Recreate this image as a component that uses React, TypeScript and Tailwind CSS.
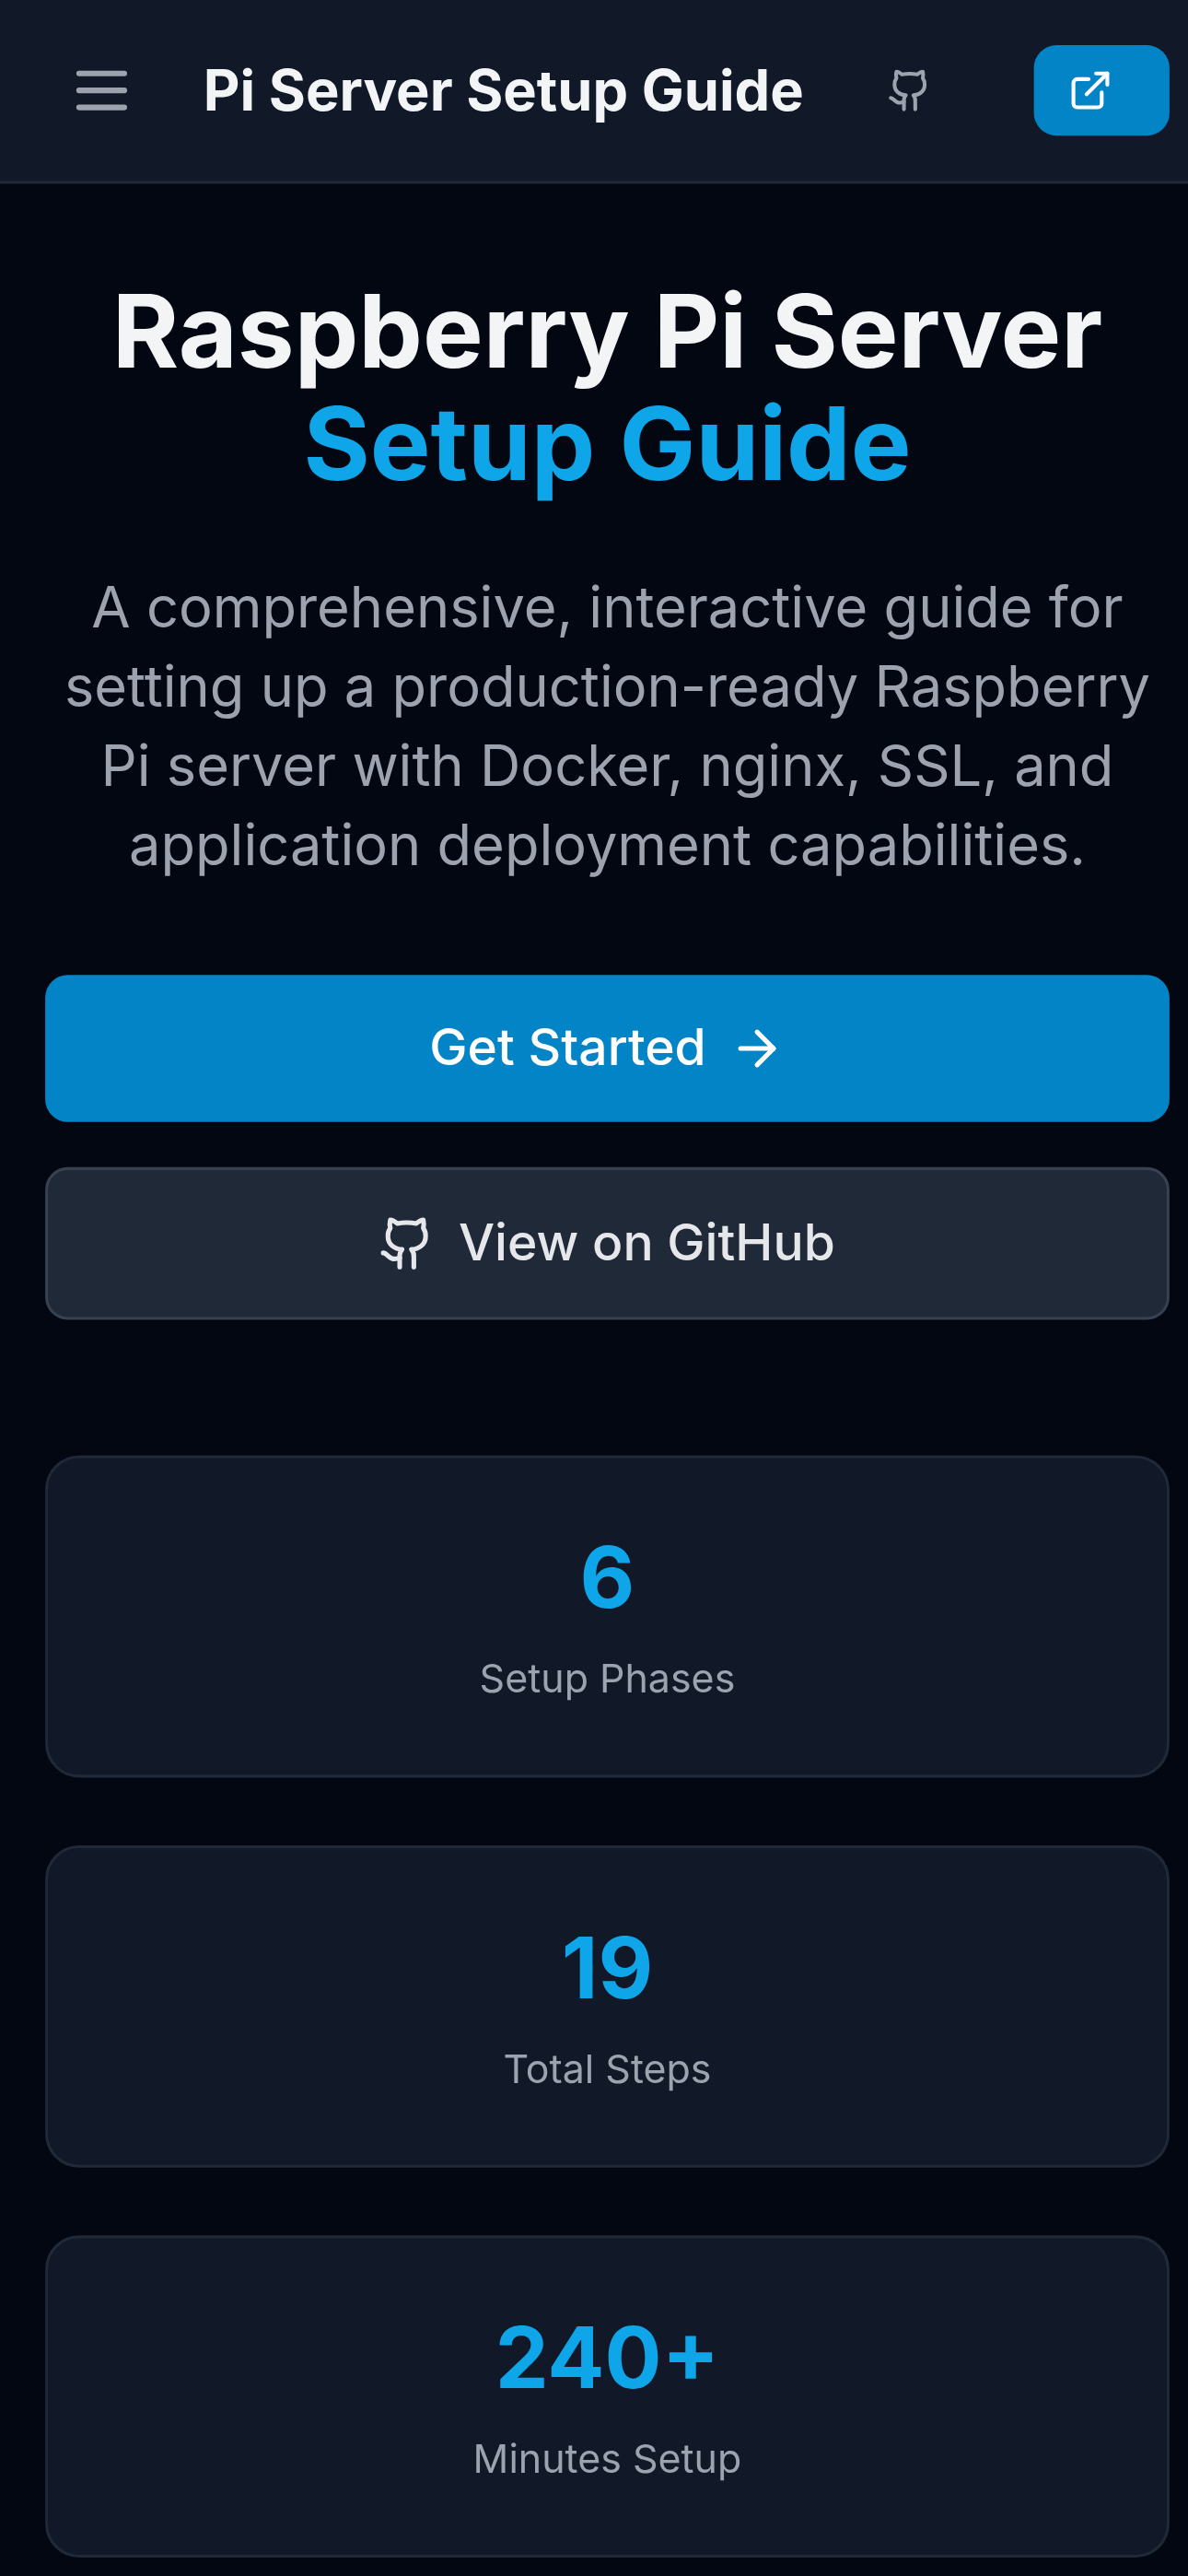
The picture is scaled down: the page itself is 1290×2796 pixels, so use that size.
import { ArrowRight, ExternalLink, Github } from "lucide-react";

const stats = [
  { value: "6", label: "Setup Phases" },
  { value: "19", label: "Total Steps" },
  { value: "240+", label: "Minutes Setup" },
];

function MenuIcon() {
  return (
    <svg
      viewBox="0 0 24 24"
      fill="none"
      stroke="currentColor"
      strokeWidth={2}
      strokeLinecap="round"
      strokeLinejoin="round"
      className="h-6 w-6"
    >
      <path d="M4 6h16M4 12h16M4 18h16" />
    </svg>
  );
}

function Header() {
  return (
    <header className="flex h-[65px] items-center justify-between border-b border-[#1f2937] bg-[#111827] px-4">
      <div className="flex items-center gap-4">
        <button aria-label="Open menu" className="rounded-lg p-2 text-[#9ca3af]">
          <MenuIcon />
        </button>
        <h1 className="text-xl font-bold whitespace-nowrap text-[#f3f4f6]">Pi Server Setup Guide</h1>
      </div>
      <div className="flex items-center gap-4">
        <a aria-label="GitHub" className="flex h-8 items-center rounded-lg px-3 text-[#9ca3af]">
          <Github className="mr-2 h-4 w-4" />
        </a>
        <a aria-label="Open site" className="flex h-8 items-center rounded-lg bg-[#0284c7] px-3 text-white">
          <ExternalLink className="mr-2 h-4 w-4" />
        </a>
      </div>
    </header>
  );
}

function Hero() {
  return (
    <section className="mb-12 text-center">
      <h2 className="mb-6 text-4xl font-bold text-[#f3f4f6]">
        Raspberry Pi Server
        <span className="block text-[#0ea5e9]">Setup Guide</span>
      </h2>
      <p className="mb-8 text-xl text-[#9ca3af]">
        A comprehensive, interactive guide for setting up a production-ready Raspberry Pi server with
        Docker, nginx, SSL, and application deployment capabilities.
      </p>
      <div className="flex flex-col gap-4 text-lg font-medium">
        <a className="flex items-center justify-center rounded-lg bg-[#0284c7] px-6 py-3 text-white">
          Get Started
          <ArrowRight className="ml-2 h-5 w-5" />
        </a>
        <a className="flex items-center justify-center rounded-lg border border-[#374151] bg-[#1f2937] px-6 py-3 text-[#e5e7eb]">
          <Github className="mr-2 h-5 w-5" />
          View on GitHub
        </a>
      </div>
    </section>
  );
}

export default function App() {
  return (
    <div className="h-[2796px] w-[1290px] overflow-hidden bg-[#030712] font-['Inter',sans-serif]">
      <div className="w-[430px] origin-top-left [transform:scale(3.0674)]">
        <Header />
        <main className="px-4 py-8">
          <Hero />
          <section className="grid gap-6">
            {stats.map((s) => (
              <div key={s.label} className="rounded-xl border border-[#1f2937] bg-[#111827] p-6 text-center">
                <div className="mb-2 text-3xl font-bold text-[#0ea5e9]">{s.value}</div>
                <div className="text-sm text-[#9ca3af]">{s.label}</div>
              </div>
            ))}
          </section>
        </main>
      </div>
    </div>
  );
}
